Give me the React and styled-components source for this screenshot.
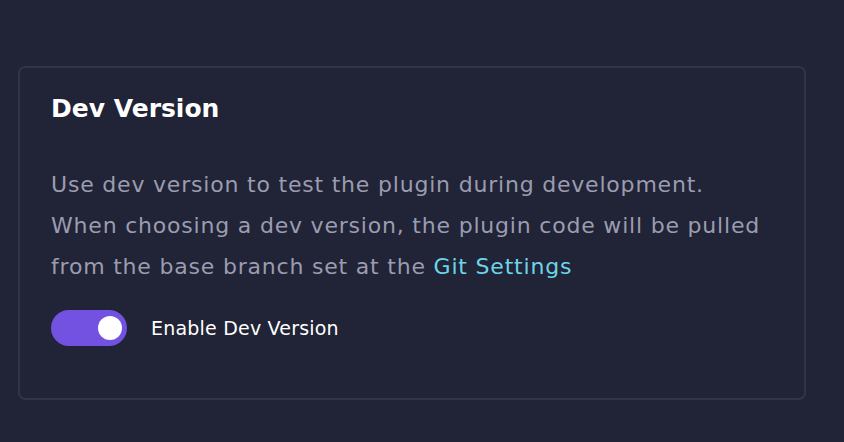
import React, { useState } from "react";
import styled, { createGlobalStyle } from "styled-components";

const GlobalStyle = createGlobalStyle`
    html, body {
        margin: 0;
        padding: 0;
        background: #212336;
    }
    body {
        font-family: "DejaVu Sans", "Noto Sans", sans-serif;
        width: 844px;
        height: 442px;
        overflow: hidden;
    }
`;

function App() {
    const [enabled, setEnabled] = useState(true);

    return (
        <>
            <GlobalStyle />
            <Page>
                <Card>
                    <Title>Dev Version</Title>
                    <Description>
                        Use dev version to test the plugin during development.
                        <br />
                        When choosing a dev version, the plugin code will be
                        pulled
                        <br />
                        from the base branch set at the{" "}
                        <GitLink href="#">Git Settings</GitLink>
                    </Description>
                    <ToggleRow>
                        <Switch
                            $on={enabled}
                            onClick={() => setEnabled(!enabled)}
                            aria-pressed={enabled}
                        >
                            <Knob $on={enabled} />
                        </Switch>
                        <ToggleLabel>Enable Dev Version</ToggleLabel>
                    </ToggleRow>
                </Card>
            </Page>
        </>
    );
}

const Page = styled.div`
    padding: 66px 39px 0 18px;
`;
const Card = styled.div`
    box-sizing: border-box;
    width: 788px;
    height: 334px;
    border: 2px solid #30344a;
    border-radius: 7px;
    padding: 21px 31px 0;
`;
const Title = styled.h2`
    margin: 0;
    color: #ffffff;
    font-size: 25px;
    font-weight: 700;
    line-height: 40px;
`;
const Description = styled.p`
    margin: 35px 0 0;
    color: #9b9cb0;
    font-size: 22px;
    letter-spacing: 0.8px;
    line-height: 41px;
`;
const GitLink = styled.a`
    color: #6cd6e8;
    text-decoration: none;
`;
const ToggleRow = styled.div`
    display: flex;
    align-items: center;
    gap: 24px;
    margin-top: 23px;
`;
const Switch = styled.button`
    position: relative;
    width: 76px;
    height: 36px;
    padding: 0;
    border: none;
    border-radius: 18px;
    background: ${(p) => (p.$on ? "#7452e1" : "#3a3e55")};
    cursor: pointer;
`;
const Knob = styled.span`
    position: absolute;
    top: 6px;
    left: ${(p) => (p.$on ? "47px" : "6px")};
    width: 24px;
    height: 24px;
    border-radius: 50%;
    background: #ffffff;
`;
const ToggleLabel = styled.span`
    color: #ffffff;
    font-size: 19px;
    letter-spacing: 0.2px;
`;

export default App;
